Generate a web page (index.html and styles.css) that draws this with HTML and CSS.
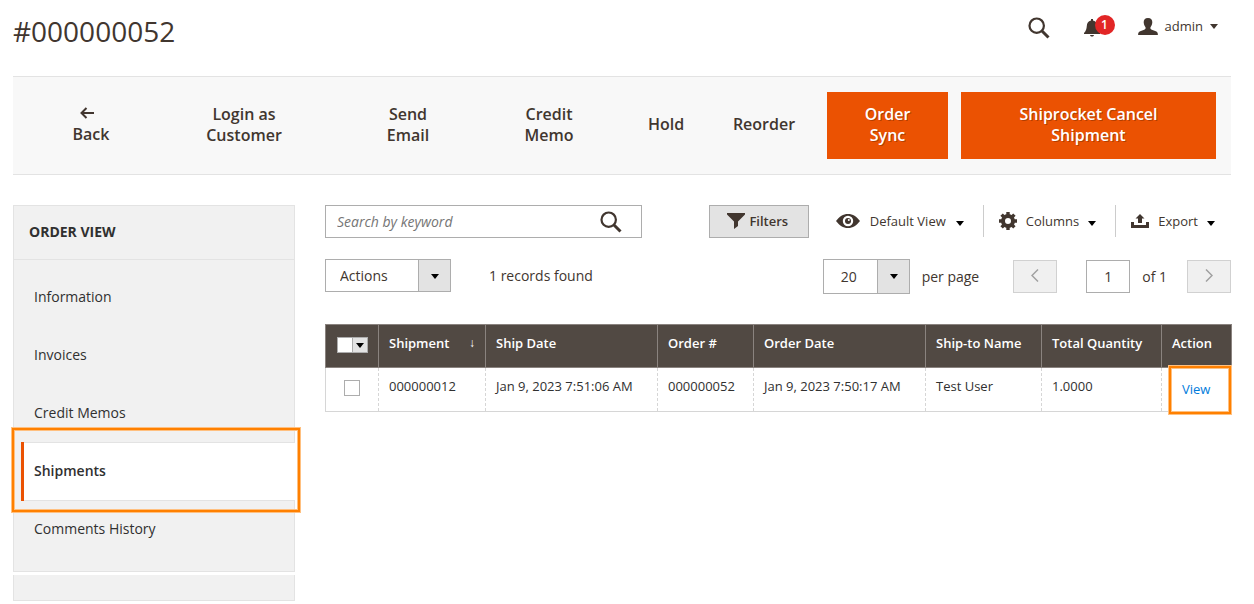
FILE: index.html
```html
<!DOCTYPE html>
<html lang="en">
  <head>
    <meta charset="UTF-8" />
    <meta name="viewport" content="width=device-width, initial-scale=1.0" />
    <title>#000000052</title>
    <link rel="stylesheet" href="styles.css">
  </head>
  <body>
    <header class="page-header">
      <h1>#000000052</h1>
      <div class="header-tools">
        <button class="icon-button" aria-label="Search">
          <svg width="22" height="22" viewBox="0 0 22 22"><circle cx="8.7" cy="8.7" r="7.2" fill="none" stroke="currentColor" stroke-width="2.2"/><path d="M14 14l6.5 6.5" stroke="currentColor" stroke-width="3"/></svg>
        </button>
        <button class="icon-button notifications" aria-label="Notifications">
          <svg width="16" height="18" viewBox="0 0 16 18"><path d="M7 0h2v1.5c3 .6 4 2.8 4.200 5.500.2 3 .8 4.800 2.800 7v1H0v-1c2-2.200 2.600-4 2.800-7C3 4.300 4 2.100 7 1.500zM6 16h4c-.3 1.300-1 1.600-2 1.600S6.300 17.300 6 16z" fill="currentColor"/></svg>
          <span class="badge">1</span>
        </button>
        <button class="icon-button account">
          <svg width="20" height="17" viewBox="0 0 20 17"><path d="M10 0c3 0 4.500 1.800 4.300 4.500-.2 2.500-1.300 3.600-1.800 4.800-.3 1.200 0 1.900 1.300 2.400l4 1.500c1.500.6 2.100 1.600 2.100 3.800H.1c0-2.200.6-3.200 2.100-3.800l4-1.500c1.300-.5 1.600-1.200 1.300-2.400C7 8.100 5.900 7 5.700 4.500 5.500 1.800 7 0 10 0z" fill="currentColor"/></svg>
          <span>admin</span>
          <i class="caret"></i>
        </button>
      </div>
    </header>

    <div class="page-actions">
      <button class="action back">
        <svg width="14" height="12" viewBox="0 0 14 12"><path d="M6.500 1L1.500 6l5 5M1.500 6H14" fill="none" stroke="currentColor" stroke-width="2"/></svg>
        <span>Back</span>
      </button>
      <button class="action login">Login as<br />Customer</button>
      <button class="action send">Send<br />Email</button>
      <button class="action credit">Credit<br />Memo</button>
      <button class="action hold">Hold</button>
      <button class="action reorder">Reorder</button>
      <button class="action primary sync">Order<br />Sync</button>
      <button class="action primary cancel">Shiprocket Cancel<br />Shipment</button>
    </div>

    <div class="page-columns">
      <aside class="sidebar">
        <nav class="order-nav">
          <h2>Order View</h2>
          <ul>
            <li><a href="#">Information</a></li>
            <li><a href="#">Invoices</a></li>
            <li><a href="#">Credit Memos</a></li>
            <li class="active"><a href="#">Shipments</a></li>
            <li><a href="#">Comments History</a></li>
          </ul>
        </nav>
        <div class="nav-end"></div>
      </aside>

      <main class="grid">
        <div class="grid-row">
          <div class="search">
            <input type="text" placeholder="Search by keyword" aria-label="Search by keyword" />
            <button class="icon-button" aria-label="Search">
              <svg width="22" height="22" viewBox="0 0 22 22"><circle cx="8.7" cy="8.7" r="7.2" fill="none" stroke="currentColor" stroke-width="2.2"/><path d="M14 14l6.500 6.500" stroke="currentColor" stroke-width="3"/></svg>
            </button>
          </div>
          <div class="grid-tools">
            <button class="filters">
              <svg width="18" height="16" viewBox="0 0 18 16"><path d="M0 0h18v1.500L11 8.500V13l-4 3V8.500L0 1.500z" fill="currentColor"/></svg>
              <span>Filters</span>
            </button>
            <button class="tool view">
              <svg width="24" height="14" viewBox="0 0 24 14"><path fill-rule="evenodd" d="M0 7C3.500 2.500 7 0 12 0s8.500 2.500 12 7c-3.500 4.500-7 7-12 7S3.500 11.500 0 7zM12 1.800a5.200 5.200 0 1 0 0 10.400 5.200 5.200 0 1 0 0-10.400z" fill="currentColor"/><circle cx="12" cy="7" r="3" fill="currentColor"/><circle cx="12.800" cy="6" r="1" fill="#fff"/></svg>
              <span>Default View</span>
              <i class="caret"></i>
            </button>
            <button class="tool">
              <svg width="18" height="18" viewBox="0 0 18 18"><circle cx="9" cy="9" r="5" fill="none" stroke="currentColor" stroke-width="4"/><path d="M9 0v4M9 14v4M0 9h4M14 9h4M2.600 2.600l2.900 2.900M12.500 12.500l2.900 2.900M2.600 15.400l2.900-2.900M12.500 5.500l2.900-2.900" stroke="currentColor" stroke-width="3.400"/></svg>
              <span>Columns</span>
              <i class="caret"></i>
            </button>
            <button class="tool">
              <svg width="18" height="14" viewBox="0 0 18 14"><path d="M0 8h3v3h12V8h3v6H0zM9 0l4.500 4.500H11V9H7V4.500H4.500z" fill="currentColor"/></svg>
              <span>Export</span>
              <i class="caret"></i>
            </button>
          </div>
        </div>

        <div class="grid-row">
          <div class="massaction">
            <div class="select">
              <select class="select-actions" aria-label="Actions">
                <option>Actions</option>
              </select>
            </div>
            <span>1 records found</span>
          </div>
          <div class="pager">
            <div class="select">
              <select class="select-size" id="pageSize">
                <option>20</option>
              </select>
            </div>
            <label for="pageSize">per page</label>
            <button class="page-button previous" aria-label="Previous page" disabled>
              <svg width="8" height="13" viewBox="0 0 8 13"><path d="M7 .5l-6 6 6 6" fill="none" stroke="currentColor" stroke-width="1.500"/></svg>
            </button>
            <input type="text" id="pageCurrent" value="1" />
            <label for="pageCurrent">of 1</label>
            <button class="page-button next" aria-label="Next page" disabled>
              <svg width="8" height="13" viewBox="0 0 8 13"><path d="M1 .5l6 6-6 6" fill="none" stroke="currentColor" stroke-width="1.500"/></svg>
            </button>
          </div>
        </div>

        <table>
          <colgroup>
            <col class="col-check" />
            <col class="col-shipment" />
            <col class="col-date" />
            <col class="col-order" />
            <col class="col-date" />
            <col class="col-name" />
            <col class="col-quantity" />
            <col class="col-action" />
          </colgroup>
          <thead>
            <tr>
              <th>
                <div class="multicheck">
                  <input type="checkbox" aria-label="Select all" />
                  <button aria-label="Selection options"><i class="caret"></i></button>
                </div>
              </th>
              <th><div class="sorted">Shipment <span>↓</span></div></th>
              <th>Ship Date</th>
              <th>Order #</th>
              <th>Order Date</th>
              <th>Ship-to Name</th>
              <th>Total Quantity</th>
              <th>Action</th>
            </tr>
          </thead>
          <tbody>
            <tr>
              <td class="cell-check"><input type="checkbox" aria-label="Select shipment 000000012" /></td>
              <td>000000012</td>
              <td>Jan 9, 2023 7:51:06 AM</td>
              <td>000000052</td>
              <td>Jan 9, 2023 7:50:17 AM</td>
              <td>Test User</td>
              <td>1.0000</td>
              <td class="cell-action"><a href="#">View</a></td>
            </tr>
          </tbody>
        </table>
      </main>
    </div>
  </body>
</html>
```
FILE: styles.css
```css
* {
  box-sizing: border-box;
}
body {
  margin: 0;
  padding: 0 23px 0 13px;
  font-family: "Open Sans", "Noto Sans", sans-serif;
  font-size: 14px;
  line-height: 20px;
  color: #41362f;
  background-color: #fff;
}
button,
input,
select {
  margin: 0;
  font: inherit;
  color: inherit;
}
button {
  cursor: pointer;
}
svg {
  display: block;
  flex: none;
}
.caret {
  flex: none;
  width: 0;
  height: 0;
  border: 4px solid transparent;
  border-top: 5px solid #000;
  border-bottom: 0;
}
.icon-button {
  display: flex;
  align-items: center;
  padding: 0;
  border: 0;
  background: none;
}

.page-header {
  display: flex;
  justify-content: space-between;
  align-items: flex-start;
  height: 76px;
  padding-top: 12px;
}
h1 {
  margin: 0;
  font-size: 28px;
  font-weight: 400;
  line-height: 38px;
}
.header-tools {
  display: flex;
  align-items: center;
  height: 32px;
  padding-right: 13px;
}
.notifications {
  position: relative;
  margin-left: 34px;
}
.badge {
  position: absolute;
  top: -12px;
  left: 11px;
  width: 20px;
  height: 20px;
  border-radius: 50%;
  background-color: #e22626;
  color: #fff;
  font-size: 12px;
  font-weight: 600;
  text-align: center;
}
.notifications .badge {
  top: -4px;
}
.account {
  margin-left: 38px;
  padding-bottom: 4px;
  gap: 7px;
  font-size: 13px;
}
.account .caret {
  border-top-color: #41362f;
}

.page-actions {
  display: flex;
  gap: 13px;
  padding: 15px 15px 15px 30px;
  border-top: 1px solid #e3e3e3;
  border-bottom: 1px solid #e3e3e3;
  background-color: #f8f8f8;
}
.action {
  min-height: 67px;
  padding: 0 0 2px;
  border: 0;
  background: none;
  font-size: 16px;
  font-weight: 600;
  line-height: 21px;
}
.back {
  display: flex;
  flex: 96 1 0;
  flex-direction: column;
  align-items: center;
  justify-content: center;
}
.back svg {
  margin: 3px 8px 5px 0;
}
.login {
  flex: 184 1 0;
}
.send {
  flex: 118 1 0;
}
.credit {
  flex: 138 1 0;
}
.hold {
  flex: 70 1 0;
}
.reorder {
  flex: 100 1 0;
}
.sync {
  flex: 121 1 0;
}
.cancel {
  flex: 255 1 0;
}
.primary {
  background-color: #eb5202;
  color: #fff;
  text-shadow: 1px 1px 0 rgba(0, 0, 0, 0.25);
}

.page-columns {
  display: flex;
  align-items: flex-start;
  gap: 30px;
  padding-top: 30px;
}
.sidebar {
  flex: 0 0 282px;
}
.order-nav {
  border: 1px solid #e3e3e3;
  background-color: #f1f1f1;
}
.order-nav h2 {
  margin: 0;
  padding: 16px 15px 17px;
  border-bottom: 1px solid #e3e3e3;
  color: #303030;
  font-size: 14px;
  font-weight: 700;
  text-transform: uppercase;
}
.order-nav ul {
  margin: 0;
  padding: 8px 0 13px 7px;
  list-style: none;
}
.order-nav a {
  display: block;
  padding: 19px 13px;
  color: #303030;
  text-decoration: none;
}
.order-nav .active {
  position: relative;
  margin-right: -1px;
  margin-bottom: -1px;
  border-top: 1px solid #e3e3e3;
  border-bottom: 1px solid #e3e3e3;
  background-color: #fff;
  font-weight: 600;
}
.order-nav .active a {
  margin: -1px 0;
  padding: 19px 10px 20px;
  border-left: 3px solid #eb5202;
}
/* callout frames round the open tab and its link */
.order-nav .active::after,
.cell-action::after {
  content: "";
  position: absolute;
  border: 2px solid #ff8000;
  box-shadow: 0 0 0 1px #ffc080, inset 0 0 0 1px #ffc080;
  pointer-events: none;
}
.order-nav .active::after {
  inset: -15px -5px -12px -9px;
}
.nav-end {
  height: 26px;
  margin-top: 3px;
  border: 1px solid #e3e3e3;
  border-top: 0;
  background-color: #f1f1f1;
}

.grid {
  flex: 1;
  min-width: 0;
}
.grid-row {
  display: flex;
  justify-content: space-between;
  align-items: flex-start;
  margin-bottom: 21px;
}
.search {
  display: flex;
  flex: 0 1 317px;
  height: 33px;
  padding-right: 19px;
  border: 1px solid #adadad;
}
.search input {
  flex: 1;
  min-width: 0;
  padding: 0 11px;
  border: 0;
  background: none;
}
.search input::placeholder {
  color: #757575;
  font-style: italic;
}
.grid-tools {
  display: flex;
  align-items: flex-start;
}
.massaction,
.pager {
  display: flex;
  align-items: center;
}
.filters {
  display: flex;
  align-items: center;
  justify-content: center;
  gap: 4px;
  width: 100px;
  height: 33px;
  padding: 0 2px 2px 0;
  border: 1px solid #adadad;
  background-color: #e3e3e3;
  font-size: 13px;
  font-weight: 600;
}
.tool {
  display: flex;
  align-items: center;
  gap: 9px;
  height: 32px;
  padding: 0 19px 0 15px;
  border: 0;
  background: none;
  font-size: 13px;
}
.tool + .tool {
  border-left: 1px solid #ccc;
}
.tool:last-child {
  padding-right: 16px;
}
.tool .caret {
  margin-top: 4px;
}
.view {
  gap: 10px;
  padding-left: 27px;
}
.select {
  position: relative;
}
.select::before {
  content: "";
  position: absolute;
  inset: 1px 1px 1px auto;
  width: 31px;
  border-left: 1px solid #adadad;
  background-color: #e3e3e3;
  pointer-events: none;
}
.select::after {
  content: "";
  position: absolute;
  top: 15px;
  right: 12px;
  border: 4px solid transparent;
  border-top: 5px solid #000;
  border-bottom: 0;
  pointer-events: none;
}
.select select {
  display: block;
  border: 1px solid #adadad;
  border-radius: 0;
  background-color: #fff;
  appearance: none;
}
.select-actions {
  width: 126px;
  height: 33px;
  padding: 0 14px;
}
.select-size {
  width: 87px;
  height: 35px;
  padding: 0 17px;
}
.massaction {
  gap: 38px;
}
.pager label {
  margin-left: 12px;
}
.page-button,
.pager input {
  width: 44px;
  height: 33px;
  padding: 0;
  border: 1px solid #adadad;
}
.pager input {
  margin-left: 29px;
  text-align: center;
}
.page-button {
  display: flex;
  align-items: center;
  justify-content: center;
  border-color: #d1d1d1;
  background-color: #f0f0f0;
  color: #a0a0a0;
}
.page-button svg {
  margin-bottom: 2px;
}
.previous {
  margin-left: 34px;
}
.next {
  margin-left: 20px;
}

table {
  width: 100%;
  margin-top: 30px;
  border-collapse: collapse;
  table-layout: fixed;
  font-size: 13px;
  line-height: 18px;
}
.col-check {
  width: 53px;
}
.col-shipment {
  width: 107px;
}
.col-date {
  width: 172px;
}
.col-order {
  width: 96px;
}
.col-name {
  width: 116px;
}
.col-quantity {
  width: 120px;
}
.col-action {
  width: 70px;
}
th,
td {
  height: 43px;
  padding: 9px 10px;
  text-align: left;
  vertical-align: top;
  white-space: nowrap;
}
td {
  height: 44px;
  border: 1px dashed #d6d6d6;
  border-bottom-style: solid;
  color: #303030;
}
td:first-child {
  border-left-style: solid;
}
td:last-child {
  border-right-style: solid;
}
th {
  border: 1px solid #8a837f;
  background-color: #514943;
  color: #fff;
  font-weight: 600;
}
.sorted {
  display: flex;
  justify-content: space-between;
}
.sorted span {
  font-size: 12px;
  font-weight: 400;
}
input[type="checkbox"] {
  display: block;
  width: 16px;
  height: 16px;
  border: 1px solid #adadad;
  background-color: #fff;
  appearance: none;
}
.multicheck {
  display: flex;
  margin-top: 3px;
  margin-left: 1px;
}
.multicheck button {
  display: flex;
  align-items: center;
  justify-content: center;
  width: 16px;
  height: 16px;
  margin-left: -1px;
  padding: 0;
  border: 1px solid #adadad;
  background-color: #e3e3e3;
}
.cell-check input {
  margin: 3px auto 0;
}
.cell-action {
  position: relative;
  padding: 12px 20px;
}
.cell-action::after {
  inset: -2px 0 -3px 7px;
}
.cell-action a {
  color: #007bdb;
  text-decoration: none;
}
```
